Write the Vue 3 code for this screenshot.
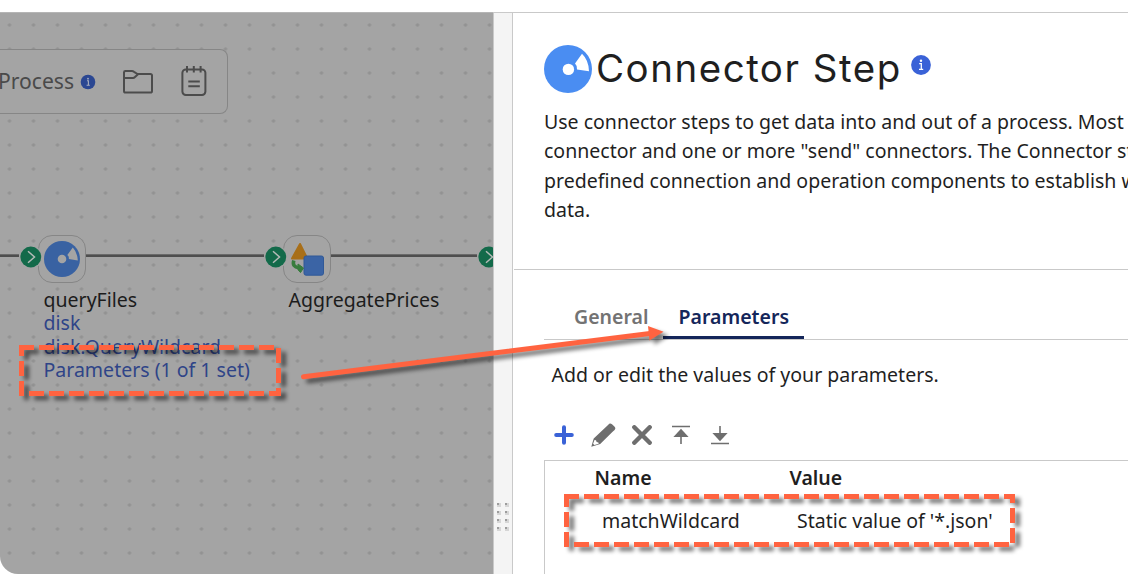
<script setup>
const description = [
  'Use connector steps to get data into and out of a process. Most',
  'connector and one or more "send" connectors. The Connector st',
  'predefined connection and operation components to establish w',
  'data.',
]
const tabs = [
  { label: 'General', active: false },
  { label: 'Parameters', active: true },
]
const rows = [{ name: 'matchWildcard', value: "Static value of '*.json'" }]
const handles = [30.5, 275.5, 488.5]
</script>

<template>
  <div class="screen">
    <div class="workspace">
      <section class="canvas">
        <div class="process-bar">
          <span class="process-name">Process</span>
          <svg class="bar-info" width="16" height="16" viewBox="0 0 16 16">
            <circle cx="8" cy="8" r="7.3" fill="#2b4792" />
            <path d="M7 6.8H8.4V11M6.6 11.2H9.8" fill="none" stroke="#a9afbf" stroke-width="1.1" />
            <circle cx="8" cy="4.7" r="0.9" fill="#a9afbf" />
          </svg>
          <svg class="bar-folder" width="32" height="26" viewBox="0 0 32 26" fill="none" stroke="#4c4c4c" stroke-width="2" stroke-linejoin="round">
            <path d="M2 22V3.4Q2 2 3.4 2H10Q11 2 12 2.8L15.5 5H28.4Q30 5 30 6.5V22Q30 23.6 28.4 23.6H3.6Q2 23.6 2 22Z" />
            <path d="M2 9H11Q12 9 13 8L16 5.2" />
          </svg>
          <svg class="bar-note" width="26" height="32" viewBox="0 0 26 32" fill="none" stroke="#4c4c4c" stroke-width="2">
            <rect x="1.4" y="4.4" width="23" height="25.6" rx="3.4" />
            <path d="M6 1V7.5M12.8 1V7.5M19.6 1V7.5M7.3 16.5H18.8M7.3 21.3H18.8" />
          </svg>
        </div>

        <svg class="flow" width="493" height="100" viewBox="0 200 493 100">
          <g>
            <rect x="0" y="254" width="19" height="1" fill="#6a6a6a" /><rect x="0" y="255" width="19" height="2" fill="#4e4e4e" />
            <rect x="86" y="254" width="178" height="1" fill="#6a6a6a" /><rect x="86" y="255" width="178" height="2" fill="#4e4e4e" />
            <rect x="331" y="254" width="146" height="1" fill="#6a6a6a" /><rect x="331" y="255" width="146" height="2" fill="#4e4e4e" />
          </g>
          <g fill="#a4a4a4" stroke="#868686">
            <rect x="38.5" y="235.5" width="47" height="47" rx="13.5" />
            <rect x="283.5" y="235.5" width="47" height="47" rx="13.5" />
          </g>
          <g transform="translate(62 259)">
            <circle r="18" fill="#3962a2" />
            <circle r="4.3" fill="#a4a4a4" />
            <path d="M5.3 -4L10.8 -11.5Q15.5 -6.5 15.8 1.6L6.8 0Q7.3 -2.5 5.3 -4Z" fill="#a4a4a4" />
          </g>
          <path d="M300 244L307.3 258.5H292Z" fill="#a86f19" stroke="#a86f19" stroke-width="2" stroke-linejoin="round" />
          <rect x="304" y="256" width="19.5" height="19.2" rx="2" fill="#3b64a5" stroke="#315997" />
          <path d="M293.8 260.5Q291.8 266.8 299 267.8" fill="none" stroke="#387c3e" stroke-width="3.6" />
          <path d="M298 264L303.5 268L300.5 272.6L298 269.8Z" fill="#387c3e" stroke="#387c3e" stroke-linejoin="round" />
          <g v-for="x in handles" :key="x">
            <circle :cx="x + 0.3" cy="257" r="11.6" fill="#a4a4a4" />
            <circle :cx="x + 0.3" cy="257" r="10.4" fill="#136a4a" />
            <path :d="`M${x - 2.5} 251.2L${x + 4} 257L${x - 2.5} 262.8`" fill="none" stroke="#b4bab7" stroke-width="1.5" />
          </g>
        </svg>

        <div class="node-label first">
          <span class="node-name">queryFiles</span>
          <span>disk</span>
          <span>disk.QueryWildcard</span>
          <span>Parameters (1 of 1 set)</span>
        </div>
        <div class="node-label second">
          <span class="node-name">AggregatePrices</span>
        </div>
      </section>

      <div class="splitter">
        <div class="grip"><i v-for="n in 8" :key="n"></i></div>
      </div>

      <section class="panel">
        <header class="intro">
          <div class="title-row">
            <svg width="48" height="48" viewBox="-24 -24 48 48">
              <circle r="24" fill="#4a8df2" />
              <circle cx="0.4" cy="0.4" r="5.7" fill="#fff" />
              <path d="M7 -5.5L14 -15.2Q20.7 -8.8 21 2.2L9 0.4Q9.3 -3.5 7 -5.5Z" fill="#fff" />
            </svg>
            <h1>Connector Step</h1>
            <svg class="title-info" width="20" height="20" viewBox="0 0 20 20">
              <circle cx="10" cy="10" r="9.9" fill="#3a62d7" />
              <path d="M8.2 8.6H10.3V14M8 14.3H12.2" fill="none" stroke="#fff" stroke-width="1.3" />
              <circle cx="10" cy="5.7" r="1.2" fill="#fff" />
            </svg>
          </div>
          <p class="description"><span v-for="line in description" :key="line">{{ line }}</span></p>
        </header>

        <div class="content">
          <nav class="tabs">
            <span v-for="tab in tabs" :key="tab.label" class="tab" :class="{ active: tab.active }">{{ tab.label }}</span>
          </nav>
          <p class="hint">Add or edit the values of your parameters.</p>
          <div class="actions">
            <svg width="20" height="20" viewBox="0 0 20 20"><path d="M10 2.2V17.8M2.2 10H17.8" stroke="#3a62d7" stroke-width="4" stroke-linecap="round" /></svg>
            <svg width="25" height="24" viewBox="0 0 25 24">
              <path d="M17.3 1.8Q18.8-.3 21 1.3L23.4 3.5Q25.2 5.2 23.6 6.9L21.6 8.8L9.2 21L.3 23.8L2.7 15.5Z" fill="#6e6e6e" />
              <path d="M3.5 17L5 17.2L5.6 19L7.4 19.4L7.7 20.8L3.4 22.1L2.1 20.8Z" fill="#fff" />
            </svg>
            <svg width="20" height="20" viewBox="0 0 20 20"><path d="M2.3 2.3L17.7 17.7M17.7 2.3L2.3 17.7" stroke="#6e6e6e" stroke-width="4.4" stroke-linecap="round" /></svg>
            <svg width="20" height="20" viewBox="0 0 20 20"><path d="M1 1.5H19M10 10V19" stroke="#6e6e6e" stroke-width="1.6" /><path d="M10 3.8L17.6 12H2.4Z" fill="#6e6e6e" /></svg>
            <svg width="20" height="20" viewBox="0 0 20 20"><path d="M1 18.5H19M10 1V10" stroke="#6e6e6e" stroke-width="1.6" /><path d="M10 16.2L17.6 8H2.4Z" fill="#6e6e6e" /></svg>
          </div>
          <div class="table">
            <div class="row head"><span>Name</span><span>Value</span></div>
            <div v-for="row in rows" :key="row.name" class="row"><span>{{ row.name }}</span><span>{{ row.value }}</span></div>
          </div>
        </div>
      </section>
    </div>

    <svg class="callouts" width="1128" height="574" viewBox="0 0 1128 574">
      <defs>
        <filter id="soft" x="-5%" y="-25%" width="110%" height="150%"><feGaussianBlur stdDeviation="2" /></filter>
        <g id="marks">
          <path d="M21.5 347.5H278.5V393.5H21.5Z" fill="none" stroke-width="5" stroke-dasharray="15 5" stroke-dashoffset="2.5" />
          <path d="M566.5 496.5H1012.5V544.5H566.5Z" fill="none" stroke-width="5" stroke-dasharray="15 5" stroke-dashoffset="2.5" />
          <path d="M303.5 376.7L652 333.2" fill="none" stroke-width="5" stroke-linecap="round" />
          <path d="M648 326L663.5 331.7L649.5 340.5Z" stroke="none" />
        </g>
      </defs>
      <use href="#marks" class="shade" filter="url(#soft)" />
      <use href="#marks" class="ink" />
    </svg>
  </div>
</template>

<style>
body {
  margin: 0;
  background: #fff;
}
</style>

<style scoped>
.screen {
  position: relative;
  box-sizing: border-box;
  width: 1128px;
  height: 574px;
  padding-top: 12px;
  overflow: hidden;
  background: #fff;
  color: #1f1f1f;
  font: 19.52px/29.4px 'Noto Sans', sans-serif;
  white-space: nowrap;
}
.workspace {
  display: flex;
  height: 562px;
}
.canvas {
  position: relative;
  box-sizing: border-box;
  width: 493px;
  overflow: hidden;
  border-top: 1px solid #b5b5b5;
  border-bottom-left-radius: 18px;
  background: radial-gradient(circle at 12px 12px, #929292 1.3px, transparent 2px) -2.5px 0 / 24px 24px #a4a4a4;
}
.process-bar {
  display: flex;
  align-items: center;
  box-sizing: border-box;
  width: 228px;
  height: 65px;
  margin-top: 36px;
  border: 1px solid #868686;
  border-left: 0;
  border-radius: 0 8px 8px 0;
  background: #a4a4a4;
}
.process-name {
  width: 74px;
  margin: 0 0 1px -2px;
  font-size: 21.1px;
  color: #4a4a4a;
}
.bar-info {
  margin-left: 8px;
}
.bar-folder {
  margin-left: 26px;
}
.bar-note {
  margin: 0 0 2px 27px;
}
.flow {
  position: absolute;
  left: 0;
  top: 187px;
}
.node-label {
  position: absolute;
  display: flex;
  flex-direction: column;
  top: 275px;
  line-height: 23.4px;
  color: #2f4488;
}
.node-label.first {
  left: 43.5px;
}
.node-label.second {
  left: 288.5px;
}
.node-name {
  color: #1c1c1c;
}
.splitter {
  display: flex;
  align-items: flex-start;
  box-sizing: border-box;
  width: 20px;
  border: 1px solid #c9c9c9;
  border-bottom: 0;
  background: #f4f4f4;
}
.grip {
  display: grid;
  grid-template-columns: 4px 4px;
  gap: 4px;
  margin: 490px 0 0 3px;
}
.grip i {
  width: 4px;
  height: 4px;
  background: linear-gradient(#9c9c9c, #9c9c9c) 0 0 / 2px 2px no-repeat #d6d6d6;
}
.panel {
  flex: 1;
  min-width: 0;
  overflow: hidden;
  border-top: 1px solid #c9c9c9;
}
.intro {
  box-sizing: border-box;
  height: 257px;
  margin-left: 1px;
  padding: 32px 0 0 30px;
  border-bottom: 1px solid #c9c9c9;
}
.title-row {
  display: flex;
  height: 48px;
}
h1 {
  width: 304px;
  margin: 0 0 0 4px;
  font: 400 38.5px/46px Inter, sans-serif;
  letter-spacing: 1.5px;
}
.title-info {
  margin: 10px 0 0 11px;
}
.description {
  margin: 14px 0 0;
}
.description span {
  display: block;
}
.content {
  padding: 32px 0 0 31px;
}
.tabs {
  display: flex;
  height: 37px;
  padding-left: 14px;
  border-bottom: 1px solid #c9c9c9;
}
.tab {
  box-sizing: border-box;
  width: 106px;
  height: 37px;
  padding: 0 16px;
  font-weight: 600;
  color: #737373;
}
.tab.active {
  width: 141px;
  margin-left: -1px;
  padding-left: 15.5px;
  border-bottom: 3px solid #14265a;
  color: #14265a;
}
.hint {
  margin: 20px 0 0 7.5px;
}
.actions {
  display: flex;
  align-items: center;
  gap: 19px;
  height: 24px;
  margin: 34px 0 0 10px;
}
.actions svg:nth-child(2) {
  margin: 0 -3px 0 -2px;
}
.table {
  height: 120px;
  margin-top: 13px;
  border: 1px solid #c9c9c9;
  border-right: 0;
}
.row {
  display: grid;
  grid-template-columns: 195px 1fr;
  height: 51px;
  padding-left: 57px;
  line-height: 51px;
}
.row.head {
  height: 34px;
  padding-left: 49.5px;
  font-weight: 600;
  line-height: 34px;
}
.callouts {
  position: absolute;
  left: 0;
  top: 0;
}
.ink {
  fill: #ff6340;
  stroke: #ff6340;
}
.shade {
  fill: #000;
  stroke: #000;
  opacity: 0.55;
  transform: translate(5px, 4px);
}
</style>
